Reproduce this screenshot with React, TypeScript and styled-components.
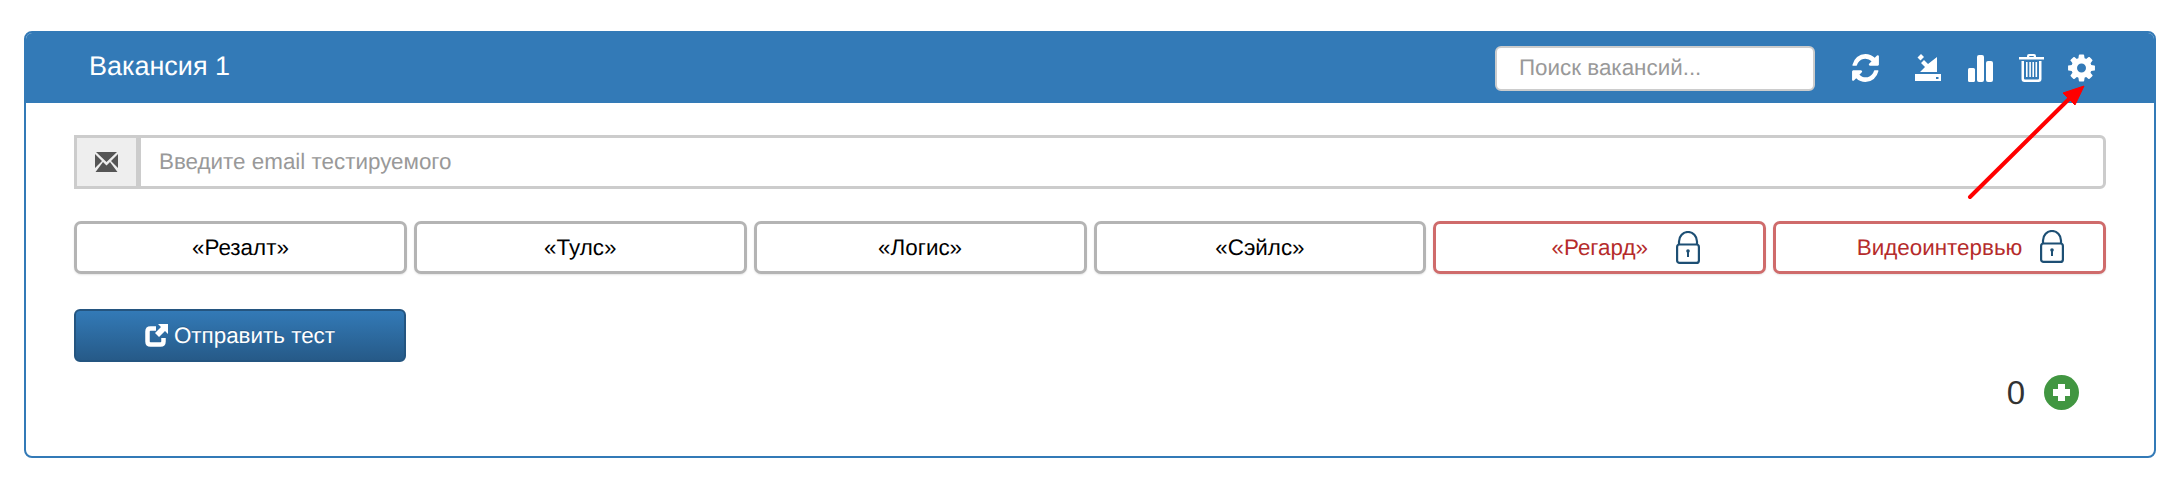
import React from "react";
import styled, { createGlobalStyle } from "styled-components";

const Global = createGlobalStyle`
  html, body { margin: 0; padding: 0; background: #fff; }
  body { font-family: "Liberation Sans", Arial, sans-serif; text-rendering: geometricPrecision; }
  input, button { text-rendering: geometricPrecision; }
`;

const Page = styled.div`
  position: relative;
  width: 2184px;
  height: 498px;
  padding: 31px 28px 0 24px;
  box-sizing: border-box;
`;

const Panel = styled.section`
  height: 427px;
  box-sizing: border-box;
  border: 2px solid #337ab7;
  border-radius: 8px;
  overflow: hidden;
`;

const Header = styled.header`
  height: 70px;
  margin: -2px -2px 0;
  padding: 2px 61px 0 65px;
  background: #337ab7;
  display: flex;
  align-items: center;
  color: #fff;
  box-sizing: content-box;
`;

const Title = styled.h3`
  margin: 0 0 4px;
  font-size: 27px;
  font-weight: 400;
  line-height: 1;
  flex: 1;
`;

const Search = styled.input`
  width: 320px;
  height: 45px;
  box-sizing: border-box;
  padding: 0 22px;
  margin: 0 37px 0 0;
  background: #fff;
  border: 2px solid #ccc;
  border-radius: 6px;
  font: 22.4px "Liberation Sans", sans-serif;
  outline: none;
  &::placeholder { color: #999; opacity: 1; }
`;

const Tools = styled.div`
  display: flex;
  align-items: center;
`;

const Tool = styled.svg<{ $w: number; $gap: number }>`
  width: ${(p) => p.$w}px;
  height: 28px;
  margin-right: ${(p) => p.$gap}px;
  fill: #fff;
  flex: none;
`;

const Body = styled.div`
  padding: 32px 48px 0 48px;
`;

const EmailGroup = styled.div`
  display: flex;
  height: 54px;
`;

const Addon = styled.div`
  width: 65px;
  box-sizing: border-box;
  border: 3px solid #ccc;
  background: #eee;
  display: flex;
  align-items: center;
  justify-content: center;
  flex: none;
`;

const Email = styled.input`
  flex: 1;
  min-width: 0;
  box-sizing: border-box;
  margin: 0;
  padding: 0 18px;
  border: 3px solid #ccc;
  border-left-width: 2px;
  border-radius: 0 6px 6px 0;
  background: #fff;
  font: 22.4px "Liberation Sans", sans-serif;
  outline: none;
  &::placeholder { color: #999; opacity: 1; }
`;

const Tests = styled.div`
  display: grid;
  grid-template-columns: repeat(6, 1fr);
  gap: 7px;
  margin-top: 32px;
`;

const TestButton = styled.button<{ $locked?: boolean }>`
  position: relative;
  height: 53px;
  box-sizing: border-box;
  padding: 0;
  background: #fff;
  border: 3px solid ${(p) => (p.$locked ? "#cf6b6b" : "#b4b4b4")};
  border-radius: 7px;
  box-shadow: 0 1px 2px rgba(0, 0, 0, 0.1);
  color: ${(p) => (p.$locked ? "#b52b2b" : "#000")};
  font: 22.4px "Liberation Sans", sans-serif;
`;

const Lock = styled.svg<{ $right: number; $top: number }>`
  position: absolute;
  right: ${(p) => p.$right}px;
  top: ${(p) => p.$top}px;
  width: 24px;
  height: 33px;
`;

const Send = styled.button`
  display: flex;
  align-items: center;
  justify-content: center;
  gap: 6px;
  width: 332px;
  height: 53px;
  margin-top: 35px;
  box-sizing: border-box;
  padding: 0;
  border: 2px solid #245580;
  border-radius: 6px;
  background: linear-gradient(to bottom, #337ab7, #265a88);
  color: #fff;
  font: 22.4px "Liberation Sans", sans-serif;
  text-shadow: 0 -1px 0 rgba(0, 0, 0, 0.2);
`;

const Counter = styled.div`
  display: flex;
  align-items: center;
  justify-content: flex-end;
  gap: 19px;
  margin: 13px 27px 0 0;
  color: #333;
  font-size: 33px;
  line-height: 35px;
`;

const Arrow = styled.svg`
  position: absolute;
  left: 1950px;
  top: 70px;
  width: 150px;
  height: 140px;
`;

const LockIcon = ({ right, top }: { right: number; top: number }) => (
  <Lock $right={right} $top={top} viewBox="0 0 24 33" fill="none" stroke="#1d4f74" strokeWidth="2.2">
    <path d="M3 14V10.500a9 9.500 0 0 1 18 0V14" />
    <rect x="1.100" y="13.500" width="21.800" height="18.400" rx="2.500" />
    <circle cx="12" cy="20" r="1.800" fill="#1d4f74" stroke="none" />
    <rect x="11" y="20" width="2" height="6" fill="#1d4f74" stroke="none" />
  </Lock>
);

export default function App() {
  return (
    <Page>
      <Global />
      <Panel>
        <Header>
          <Title>Вакансия 1</Title>
          <Search placeholder="Поиск вакансий..." />
          <Tools>
            <Tool $w={27} $gap={36} viewBox="125 128 1544 1536" preserveAspectRatio="none">
              <path d="M1639 1056q0 5-1 7-64 268-268 434.5t-478 166.5q-146 0-282.5-55t-243.5-157l-129 129q-19 19-45 19t-45-19-19-45v-448q0-26 19-45t45-19h448q26 0 45 19t19 45-19 45l-137 137q71 66 161 102t187 36q134 0 250-65t186-179q11-17 53-117 8-23 30-23h192q13 0 22.5 9.5t9.5 22.5zm25-800v448q0 26-19 45t-45 19h-448q-26 0-45-19t-19-45 19-45l138-138q-148-137-349-137-134 0-250 65t-186 179q-11 17-53 117-8 23-30 23h-199q-13 0-22.5-9.5t-9.5-22.5v-7q65-268 270-434.5t480-166.5q146 0 284 55.5t245 156.5l130-129q19-19 45-19t45 19 19 45z" />
            </Tool>
            <Tool $w={26} $gap={27} viewBox="0 0 26 28">
              <path fillRule="evenodd" d="M0 20h26v7H0zM21 23h2.500v2H21z" />
              <path d="M22 3v15H5l5-5-4-4 3-3 4 4z" />
              <path d="M2.500 3.500L6 0l3 3-3.500 3.500z" />
            </Tool>
            <Tool $w={25} $gap={26} viewBox="0 0 25 28">
              <rect x="0" y="14" width="7" height="14" rx="1.500" />
              <rect x="9" y="1" width="7" height="27" rx="2" />
              <rect x="18" y="7" width="7" height="21" rx="2" />
            </Tool>
            <Tool $w={25} $gap={24} viewBox="0 0 25 28">
              <path fillRule="evenodd" d="M8 3V2q0-2 2-2h5q2 0 2 2v1h8v2.500H0V3zm2.300 0h4.400V2h-4.400zM2.500 7H5v17.500q0 1 1 1h13q1 0 1-1V7h2.500v18q0 3-3 3h-14q-3 0-3-3z" />
              <path d="M7 8h1.600v15H7zM10.300 8h1.600v15h-1.600zM13.400 8H15v15h-1.600zM16.500 8h1.600v15h-1.600z" />
            </Tool>
            <Tool $w={27} $gap={0} viewBox="125 125 1542 1542">
              <path d="M1152 896q0-106-75-181t-181-75-181 75-75 181 75 181 181 75 181-75 75-181zm512-109v222q0 12-8 23t-20 13l-185 28q-19 54-39 91 35 50 107 138 10 12 10 25t-9 23q-27 37-99 108t-94 71q-12 0-26-9l-138-108q-44 23-91 38-16 136-29 186-7 28-36 28h-222q-14 0-24.5-8.500t-11.500-21.500l-28-184q-49-16-90-37l-141 107q-10 9-25 9-14 0-25-11-126-114-165-168-7-10-7-23 0-12 8-23 15-21 51-66.500t54-70.500q-27-50-41-99l-183-27q-13-2-21-12.500t-8-23.500v-222q0-12 8-23t19-13l186-28q14-46 39-92-40-57-107-138-10-12-10-24 0-10 9-23 26-36 98.500-107.500t94.500-71.500q13 0 26 10l138 107q44-23 91-38 16-136 29-186 7-28 36-28h222q14 0 24.500 8.500t11.500 21.500l28 184q49 16 90 37l142-107q9-9 24-9 13 0 25 10 129 119 165 170 7 8 7 22 0 12-8 23-15 21-51 66.500t-54 70.500q26 50 41 98l183 28q13 2 21 12.500t8 23.500z" />
            </Tool>
          </Tools>
        </Header>
        <Body>
          <EmailGroup>
            <Addon>
              <svg width="23" height="20" viewBox="0 0 23 20" fill="#555">
                <path d="M1 0h21L11.500 10zM0 2l7 7-7 7zM23 2v14l-7-7zM8 10l3.500 3.500L15 10l7.500 10H0.500z" />
              </svg>
            </Addon>
            <Email placeholder="Введите email тестируемого" />
          </EmailGroup>
          <Tests>
            <TestButton>«Резалт»</TestButton>
            <TestButton>«Тулс»</TestButton>
            <TestButton>«Логис»</TestButton>
            <TestButton>«Сэйлс»</TestButton>
            <TestButton $locked>
              «Регард»
              <LockIcon right={63} top={7} />
            </TestButton>
            <TestButton $locked>
              Видеоинтервью
              <LockIcon right={39} top={6} />
            </TestButton>
          </Tests>
          <Send>
            <svg width="23" height="23" viewBox="0 0 23 23" fill="none">
              <path d="M11 4.500H5.500Q2.500 4.500 2.500 7.500v10q0 3 3 3h10q3 0 3-3v-3.500" stroke="#fff" strokeWidth="4.500" />
              <path d="M13 0h10v10l-3-3-6 6-4-4 6-6z" fill="#fff" />
            </svg>
            Отправить тест
          </Send>
          <Counter>
            0
            <svg width="35" height="35" viewBox="0 0 35 35">
              <circle cx="17.500" cy="17.500" r="17.500" fill="#419641" />
              <path d="M14 9h7v5h5v7h-5v5h-7v-5H9v-7h5z" fill="#fff" />
            </svg>
          </Counter>
        </Body>
      </Panel>
      <Arrow viewBox="1950 70 150 140">
        <path d="M1970 197L2069 99" stroke="#f00" strokeWidth="4" strokeLinecap="round" />
        <path d="M2084 86L2063 93 2075 105z" fill="#f00" stroke="#f00" strokeWidth="1" />
      </Arrow>
    </Page>
  );
}
